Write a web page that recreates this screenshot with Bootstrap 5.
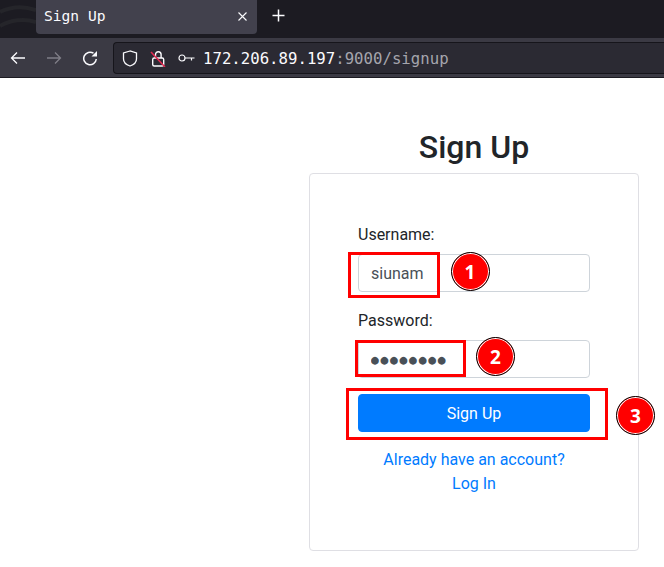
<!DOCTYPE html>
<html lang="en">
<head>
<meta charset="utf-8">
<title>Sign Up</title>
<link href="https://cdn.jsdelivr.net/npm/bootstrap@5.3.0/dist/css/bootstrap.min.css" rel="stylesheet">
<style>
html,body{margin:0;height:567px;overflow:hidden;background:#fff}
body{font-family:Roboto,"Liberation Sans",sans-serif;font-size:16px;color:#212529}
.tabstrip{height:38px;background:#1c1b22;position:relative}
.stripart{position:absolute;left:0;top:0}
.tabitem{width:221px;height:33.5px;margin-left:36px;background:#42414d;border-radius:0 0 4px 4px;color:#fbfbfe;font:14.6px/1 "DejaVu Sans Mono",monospace;padding:0 8px;position:relative}
.tabclose{margin-left:auto;margin-right:2px}
.tabplus{margin-left:15px;margin-top:9px;position:relative}
.toolbar{height:40px;background:#3b3a44;padding:4px 0 0 0;border-bottom:1px solid #1c1b22}
.navzone{width:113px;padding-left:10px;gap:20px;height:32px}
.urlbar{flex:1;height:32px;background:#2b2a33;border:1px solid #16151b;border-right:0;border-radius:4px 0 0 4px;padding-left:8px;font:15.7px "DejaVu Sans Mono",monospace;color:#fbfbfe;white-space:nowrap}
.urlmuted{color:#a5a5ad}
.pagebody{height:489px;padding-top:50px;padding-left:309px;padding-right:25px;position:relative}
.pagetitle{font-size:32px;font-weight:500;line-height:38px;margin:0 0 7px;text-align:center;color:#212529}
.signcard{height:378px;border-radius:4px;padding:48px 48px 0;border:1px solid #dfdfe4}
.signlabel{display:block;margin-bottom:6px;line-height:26px}
.signfield{height:38px;padding:6px 12px;font-size:16px;color:#495057;border:1px solid #ced4da;border-radius:4px;margin-bottom:16px;width:100%}
.signfield:focus{outline:0}
.dotfield{font-family:"DejaVu Sans Mono",monospace;font-size:13px;letter-spacing:1.7px}
.signbtn{height:38px;background:#007bff;border:1px solid #007bff;border-radius:4px;color:#fff;padding:0;line-height:38px}
.signlinks{margin-top:16px;text-align:center;line-height:24px}
.signlinks a{color:#007bff;text-decoration:none;display:block}
.redbox{position:absolute;border:3px solid #f00;pointer-events:none}
.numdot{position:absolute;width:39px;height:39px;border-radius:50%;background:#f00;border:1.5px solid #000;box-shadow:inset 0 0 0 1px #fff;color:#fff;font:700 19px "Open Sans","DejaVu Sans",sans-serif;display:flex;align-items:center;justify-content:center}
</style>
</head>
<body>
<div class="tabstrip d-flex align-items-start">
  <svg class="stripart" width="36" height="38" viewBox="0 0 36 38"><path d="M0 12C12 6 24 6 36 10M0 26C10 20 24 18 36 22" stroke="#25252a" stroke-width="4" fill="none"/></svg>
  <div class="tabitem d-flex align-items-center">
    <span>Sign Up</span>
    <svg class="tabclose" width="9" height="9" viewBox="0 0 9 9"><path d="M.5.5l8 8M8.500.5l-8 8" stroke="#fbfbfe" stroke-width="1.100" fill="none"/></svg>
  </div>
  <svg class="tabplus" width="13" height="13" viewBox="0 0 13 13"><path d="M6.500.5v12M.5 6.500h12" stroke="#fbfbfe" stroke-width="1.500" fill="none"/></svg>
</div>
<div class="toolbar d-flex">
  <div class="navzone d-flex align-items-center">
    <svg width="16" height="14" viewBox="0 0 16 14"><path d="M15 7H2M7 1.500L1.500 7 7 12.500" stroke="#fbfbfe" stroke-width="1.300" fill="none"/></svg>
    <svg width="16" height="14" viewBox="0 0 16 14"><path d="M1 7h13M9 1.500L14.500 7 9 12.500" stroke="#7f7e87" stroke-width="1.300" fill="none"/></svg>
    <svg width="16" height="16" viewBox="0 0 16 16"><path d="M14.300 9A6.300 6.300 0 1 1 11.500 3.200" stroke="#fbfbfe" stroke-width="1.500" fill="none"/><path d="M15 1v5.500H9.500z" fill="#fbfbfe"/></svg>
  </div>
  <div class="urlbar d-flex align-items-center">
    <svg width="16" height="17" viewBox="0 0 16 17"><path d="M8 1L1.500 3v6c0 3.500 3 5.800 6.500 7 3.500-1.200 6.500-3.500 6.500-7V3z" stroke="#fbfbfe" stroke-width="1.300" fill="none"/></svg>
    <svg width="16" height="17" viewBox="0 0 16 17" style="margin-left:12px"><path d="M5.500 8V4.500a2.800 2.800 0 0 1 5.600 0V8" stroke="#fbfbfe" stroke-width="1.400" fill="none"/><rect x="2.700" y="8" width="11" height="8" rx="1.500" stroke="#fbfbfe" stroke-width="1.400" fill="none"/><path d="M1 2l14 15" stroke="#e22850" stroke-width="1.500"/></svg>
    <svg width="17" height="10" viewBox="0 0 17 10" style="margin-left:12px"><circle cx="4" cy="5" r="3" stroke="#fbfbfe" stroke-width="1.200" fill="none"/><path d="M7 5h9.500M13.500 5v2.500" stroke="#fbfbfe" stroke-width="1.200" fill="none"/></svg>
    <span style="margin-left:8px">172.206.89.197<span class="urlmuted">:9000/signup</span></span>
  </div>
</div>
<main class="pagebody">
  <h1 class="pagetitle">Sign Up</h1>
  <div class="signcard bg-white">
    <form>
      <label class="signlabel" for="u">Username:</label>
      <input class="signfield" id="u" type="text" value="siunam">
      <label class="signlabel" for="p">Password:</label>
      <input class="signfield dotfield" id="p" type="text" value="●●●●●●●●">
      <button type="button" class="btn signbtn w-100 d-block">Sign Up</button>
    </form>
    <div class="signlinks">
      <a href="#">Already have an account?</a>
      <a href="#">Log In</a>
    </div>
  </div>
  <div class="redbox" style="left:348px;top:174px;width:92px;height:46px"></div>
  <div class="redbox" style="left:355px;top:262px;width:111px;height:37px"></div>
  <div class="redbox" style="left:346px;top:310px;width:262px;height:52px"></div>
  <div class="numdot" style="left:450.5px;top:174px">1</div>
  <div class="numdot" style="left:476px;top:259px">2</div>
  <div class="numdot" style="left:616px;top:318px">3</div>
</main>
</body>
</html>
